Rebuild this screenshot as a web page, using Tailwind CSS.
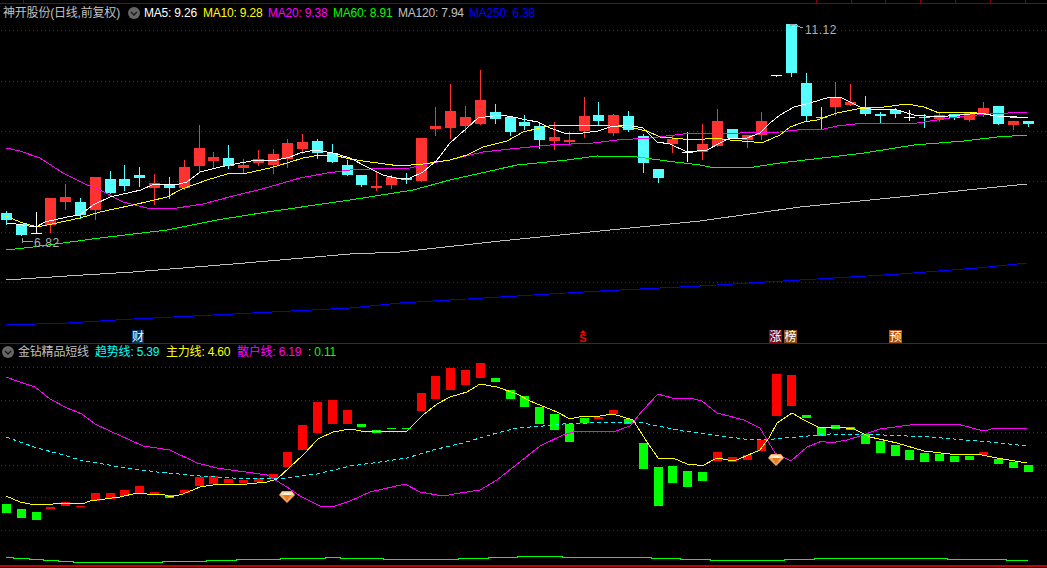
<!doctype html>
<html>
<head>
    <meta charset="UTF-8" />
    <title>神开股份 日线</title>
    <script src="https://cdn.jsdelivr.net/npm/@tailwindcss/browser@4"></script>
</head>
<body class="bg-black">
<div class="w-[1047px] h-[568px] overflow-hidden bg-black flex flex-col text-xs leading-none font-['Liberation_Sans','Noto_Sans_CJK_SC',sans-serif]">

    <!-- k-line pane -->
    <section class="relative h-[344px] border-b border-b-[#a00000]">
        <svg id="main" class="absolute inset-0" width="1047" height="343" viewBox="0 0 1047 343"></svg>
        <div class="relative h-1 border-b border-b-[#8b0000]"></div>
        <div class="relative h-[18px] pl-[3px] flex items-center whitespace-nowrap tracking-[-0.2px]">
            <span class="w-[125px] text-[#c0c0c0]">神开股份(日线,前复权)</span>
            <svg class="w-[16px] shrink-0" width="16" height="14" viewBox="0 0 16 14"><circle cx="6" cy="7" r="6" fill="#666"/><path d="M3 6l3 3 3-3" fill="none" stroke="#1c1c1c" stroke-width="1.5"/></svg>
            <span class="w-[59px] text-white">MA5: 9.26</span>
            <span class="w-[65px] text-[#ffff00]">MA10: 9.28</span>
            <span class="w-[65px] text-[#ff00ff]">MA20: 9.38</span>
            <span class="w-[65px] text-[#00ff00]">MA60: 8.91</span>
            <span class="w-[71px] text-[#c0c0c0]">MA120: 7.94</span>
            <span class="text-[#0000ff]">MA250: 6.38</span>
        </div>
        <span class="absolute left-[805px] top-[24px] text-[#b0b0b0] tracking-[0.6px]">11.12</span>
        <span class="absolute left-[34px] top-[237px] text-[#b0b0b0] tracking-[0.6px]">6.82</span>
        <span class="absolute left-[132px] top-[330px] w-[12px] h-[13px] flex items-center justify-center bg-[#003366] text-white">财</span>
        <span class="absolute left-[578px] top-[329px] w-[10px] h-[14px] flex flex-col items-center justify-end font-bold text-[#ff0000]">
            <span class="w-0 h-0 border-x-[3px] border-x-transparent border-b-[3px] border-b-[#ff0000]"></span>
            <span class="text-[11px] leading-[10px]">S</span>
        </span>
        <span class="absolute left-[769px] top-[330px] w-[13px] h-[13px] flex items-center justify-center bg-[#7d0a14] text-white">涨</span>
        <span class="absolute left-[784px] top-[330px] w-[13px] h-[13px] flex items-center justify-center bg-[#8a4a10] text-white">榜</span>
        <span class="absolute left-[889px] top-[330px] w-[13px] h-[13px] flex items-center justify-center bg-[#b0500f] text-white">预</span>
    </section>

    <!-- indicator pane -->
    <section class="relative flex-1 border-b-2 border-b-[#c80000] mb-px">
        <svg id="sub" class="absolute inset-0" width="1047" height="222" viewBox="0 344 1047 222"></svg>
        <div class="relative h-4 pl-[2px] flex items-center whitespace-nowrap tracking-[-0.2px]">
            <svg class="w-[16px] shrink-0" width="16" height="14" viewBox="0 0 16 14"><circle cx="6" cy="7" r="6" fill="#666"/><path d="M3 6l3 3 3-3" fill="none" stroke="#1c1c1c" stroke-width="1.5"/></svg>
            <span class="w-[77px] text-[#c0c0c0]">金钻精品短线</span>
            <span class="w-[71px] text-[#00ffff]">趋势线: 5.39</span>
            <span class="w-[71px] text-[#ffff00]">主力线: 4.60</span>
            <span class="w-[71px] text-[#ff00ff]">散户线: 6.19</span>
            <span class="text-[#00ff00]">: 0.11</span>
        </div>
    </section>
</div>
<script>
    const X = i => 6.5 + 14.81 * i;
    const RED = "#ff3232", CYAN = "#54ffff", WHITE = "#ffffff";

    // type, high, body top, body bottom, low
    const candles = [
        ["c",211,213,220,224],["c",224,224,235,235],["w",212,233,234,233],["r",198,198,225,232],["r",184,197,202,209],
        ["c",198,202,215,218],["r",177,177,210,219],["c",171,179,193,193],["c",165,179,186,190],["c",167,175,178,186],
        ["r",174,183,188,204],["c",177,184,188,198],["r",160,167,188,189],["r",125,148,166,171],["r",152,157,161,168],
        ["c",145,158,166,168],["r",159,165,168,173],["r",150,159,163,165],["r",149,154,165,173],["r",139,143,159,167],
        ["r",134,142,149,153],["c",139,141,153,158],["c",144,153,162,162],["c",160,165,175,175],["c",175,175,185,186],
        ["r",172,186,188,190],["r",175,177,185,188],["c",173,178,180,183],["r",138,138,181,181],["r",107,126,129,135],
        ["r",84,111,128,138],["r",106,117,126,132],["r",70,100,124,124],["c",104,112,119,123],["c",117,117,132,135],
        ["c",115,122,126,129],["c",122,126,140,148],["r",122,137,141,149],["r",132,140,142,143],["r",97,116,131,137],
        ["c",102,115,121,125],["r",114,115,133,135],["c",111,116,130,131],["c",134,136,163,172],["c",169,169,178,182],
        ["r",135,139,144,152],["w",132,152,153,161],["r",124,144,152,159],["r",109,121,146,146],["c",129,129,138,138],
        ["r",135,135,140,147],["r",112,121,135,139],["w",75,75,76,76],["c",24,24,73,76],["c",73,83,116,120],
        ["c",107,117,118,129],["r",82,97,107,115],["r",84,102,105,105],["c",96,107,114,115],["c",112,114,116,123],
        ["c",108,110,114,117],["w",110,117,118,120],["c",114,117,118,127],["r",113,115,119,121],["c",114,114,118,119],
        ["r",113,113,120,121],["r",102,108,115,116],["c",106,106,124,124],["r",121,121,125,129],["c",121,121,124,126]
    ];

    // type, top, bottom
    const bars = [
        ["g",504,513],["g",509,518],["g",512,520],["r",507,509],["r",502,506],["r",506,507],["r",493,501],["r",493,499],
        ["r",490,496],["r",486,493],["r",492,494],["g",495,498],["r",490,493],["r",477,486],["r",476,484],["r",479,483],
        ["r",480,483],["r",478,482],["r",474,479],["r",452,467],["r",425,450],["r",402,433],["r",400,424],["r",410,424],
        ["g",424,427],["g",430,433],["g",428,429],["g",428,429],["r",393,411],["r",376,399],["r",368,390],["r",370,385],
        ["r",363,378],["g",378,382],["g",390,399],["g",396,407],["g",407,424],["g",414,430],["g",424,442],["g",418,423],
        ["r",417,419],["r",410,414],["g",419,424],["g",443,469],["g",467,506],["g",466,483],["g",471,487],["g",472,481],
        ["r",452,461],["r",457,462],["r",455,460],["r",440,451],["r",374,416],["r",375,406],["g",415,418],["g",427,436],
        ["g",425,429],["g",427,430],["g",434,444],["g",441,453],["g",445,456],["g",450,460],["g",453,462],["g",454,461],
        ["g",456,462],["g",456,460],["r",452,455],["g",459,464],["g",462,468],["g",465,472]
    ];

    const ma5 = "7,223 16,224 36,227 45,222 67,217 80,215 93,205 110,197 141,190 154,184 175,185 187,182 200,172 220,167 240,163 257,160 277,160 290,157 300,153 315,150 333,153 350,158 367,167 383,175 400,179 410,178 423,172 437,160 450,143 467,128 478,118 500,115 513,117 527,120 538,122 550,128 567,134 583,133 598,131 610,127 627,125 643,128 657,142 670,144 687,152 707,150 720,143 730,138 747,138 760,133 770,123 780,115 794,107 810,103 830,97 840,97 860,107 870,109 894,109 914,115 937,117 960,115 980,113 997,116 1017,117 1028,118";
    const ma10 = "6,216 20,222 37,227 52,224 80,218 100,212 133,205 167,197 182,189 207,180 227,174 247,173 270,168 287,163 303,158 320,155 333,155 350,159 370,162 400,166 423,164 450,160 467,155 483,147 507,141 523,132 540,128 553,125 593,125 610,126 633,128 647,131 660,137 683,139 697,140 714,138 730,140 754,142 764,142 780,135 790,127 804,122 817,120 837,113 857,109 884,107 907,104 924,107 939,113 964,112 977,113 997,116 1010,117 1027,117";
    const ma20 = "6,148 20,151 40,158 63,173 87,185 100,190 123,202 147,208 177,208 203,204 233,196 262,189 300,178 327,173 350,170 370,169 410,168 427,164 450,160 470,155 483,152 510,149 550,145 593,143 617,140 650,138 683,134 700,133 740,133 780,132 797,130 824,129 837,126 864,123 917,123 937,120 964,116 990,114 1027,112";
    const ma60 = "6,250 33,247 100,238 167,230 217,220 267,212 350,200 413,190 450,180 517,165 567,160 597,156 637,157 667,161 700,165 710,167 754,167 780,163 814,159 864,153 914,145 964,141 997,137 1027,135";
    const ma120 = "6,280 67,276 133,272 233,264 350,254 400,252 500,241 600,231 700,221 800,207 900,197 977,189 1027,184";
    const ma250 = "6,325 67,323 133,319 233,314 350,308 400,303 500,297 600,291 700,286 800,280 900,274 977,268 1027,263";

    const mainLine = "6,496 20,502 35,505 53,504 77,503 82,504 90,501 120,497 137,493 147,494 163,494 170,497 183,494 200,487 213,485 222,484 247,484 267,482 277,479 290,467 303,455 318,439 333,432 350,429 367,432 407,431 423,415 437,404 450,397 467,392 480,384 497,387 517,394 530,401 557,412 570,419 583,416 600,416 613,414 633,420 647,442 658,458 673,458 687,464 697,465 702,466 717,458 734,461 760,450 769,438 777,423 792,413 804,420 820,428 837,427 854,429 870,437 897,443 924,451 950,454 977,454 997,458 1027,463";
    const retail = "6,377 17,381 35,387 50,399 67,408 82,414 95,424 110,431 143,446 170,450 197,463 217,468 267,475 287,487 300,496 320,506 332,507 350,501 370,492 405,484 420,492 443,496 460,493 480,490 497,480 540,446 563,435 577,431 600,431 613,432 630,426 643,410 658,394 672,398 690,398 702,401 717,413 744,420 760,428 775,453 791,461 807,447 822,441 830,443 847,440 860,436 880,429 917,424 957,424 984,431 995,428 1027,428";
    const trend = "6,437 37,448 60,454 80,460 120,467 157,472 200,476 233,478 287,478 317,474 350,466 373,463 407,458 433,450 463,443 497,433 517,428 543,426 563,424 617,422 643,423 663,427 683,431 700,433 744,439 774,439 797,437 830,434 884,435 930,437 990,442 1027,446";
    const floorLine = "6,557 13,557 13,558 29,558 29,559 43,559 43,560 58,560 58,561 73,561 73,562 162,562 162,561 206,561 206,560 236,560 236,559 280,559 280,558 325,558 325,557 340,557 340,558 383,558 383,559 458,559 458,558 488,558 488,557 517,557 517,556 562,556 562,557 651,557 651,558 680,558 680,559 710,559 710,560 784,560 784,559 814,559 814,558 947,558 947,559 1006,559 1006,560 1028,560";

    const rect = (x, y, w, h, c) => `<rect x="${x}" y="${y}" width="${w}" height="${h}" fill="${c}" shape-rendering="crispEdges"/>`;
    const line = (pts, c, dash) => `<polyline points="${pts}" fill="none" stroke="${c}" stroke-width="1" shape-rendering="crispEdges"${dash ? ` stroke-dasharray="${dash}"` : ""}/>`;
    // one pixel every four, as the terminal draws its grid
    const grid = y => {
        let d = "";
        for (let x = 1; x < 1047; x += 4) d += `M${x} ${y}h1v1h-1z`;
        return `<path d="${d}" fill="#a00000" shape-rendering="crispEdges"/>`;
    };

    const candle = ([t, hi, top, bot, lo], i) => {
        const left = Math.round(X(i) - 5.5), c = t == "r" ? RED : t == "c" ? CYAN : WHITE;
        return rect(left + 5, hi, 1, lo - hi + 1, c) + rect(left, top, 11, Math.max(bot - top, 1), c);
    };
    const bar = ([t, top, bot], i) => rect(Math.round(X(i) - 4.5), top, 9, Math.max(bot - top, 1), t == "r" ? "#ff0000" : "#00ff00");

    const gem = (x, y) => `<g transform="translate(${x} ${y})">
        <path d="M3 0h10l3 4-8 8-8-8z" fill="#f2a45c"/>
        <path d="M3 1h10l2 3H1z" fill="#fcd9a8"/>
        <path d="M4 4h8l-4 6z" fill="#e87c1e"/>
        <path d="M5 2h6l1 2H4z" fill="#fff4e0"/>
    </g>`;

    let mainSvg = "";
    [816, 851, 885, 920, 955, 990, 1025, 23].forEach(x => mainSvg += rect(x, 0, 1, 3, "#8b0000"));
    [30, 81, 131, 181, 232, 282].forEach(y => mainSvg += grid(y));
    mainSvg += candles.map(candle).join("");
    mainSvg += line(ma250, "#0000ff") + line(ma120, "#c0c0c0") + line(ma60, "#00ff00") + line(ma20, "#ff00ff") + line(ma10, "#ffff00") + line(ma5, "#ffffff");
    // arrows to the high and low labels
    mainSvg += `<path d="M790 26l3-2M790 24h2l11 4" fill="none" stroke="#a0a0a0" shape-rendering="crispEdges"/>`;
    mainSvg += `<path d="M22 238v5M22 241h11" fill="none" stroke="#a0a0a0" shape-rendering="crispEdges"/>`;
    document.getElementById("main").innerHTML = mainSvg;

    let subSvg = "";
    [367, 400, 432, 465, 497, 530].forEach(y => subSvg += grid(y));
    subSvg += bars.map(bar).join("");
    subSvg += line(trend, "#00ffff", "4 3") + line(retail, "#ff00ff") + line(mainLine, "#ffff00") + line(floorLine, "#00ff00");
    subSvg += gem(279, 491) + gem(768, 454);
    document.getElementById("sub").innerHTML = subSvg;
</script>
</body>
</html>
